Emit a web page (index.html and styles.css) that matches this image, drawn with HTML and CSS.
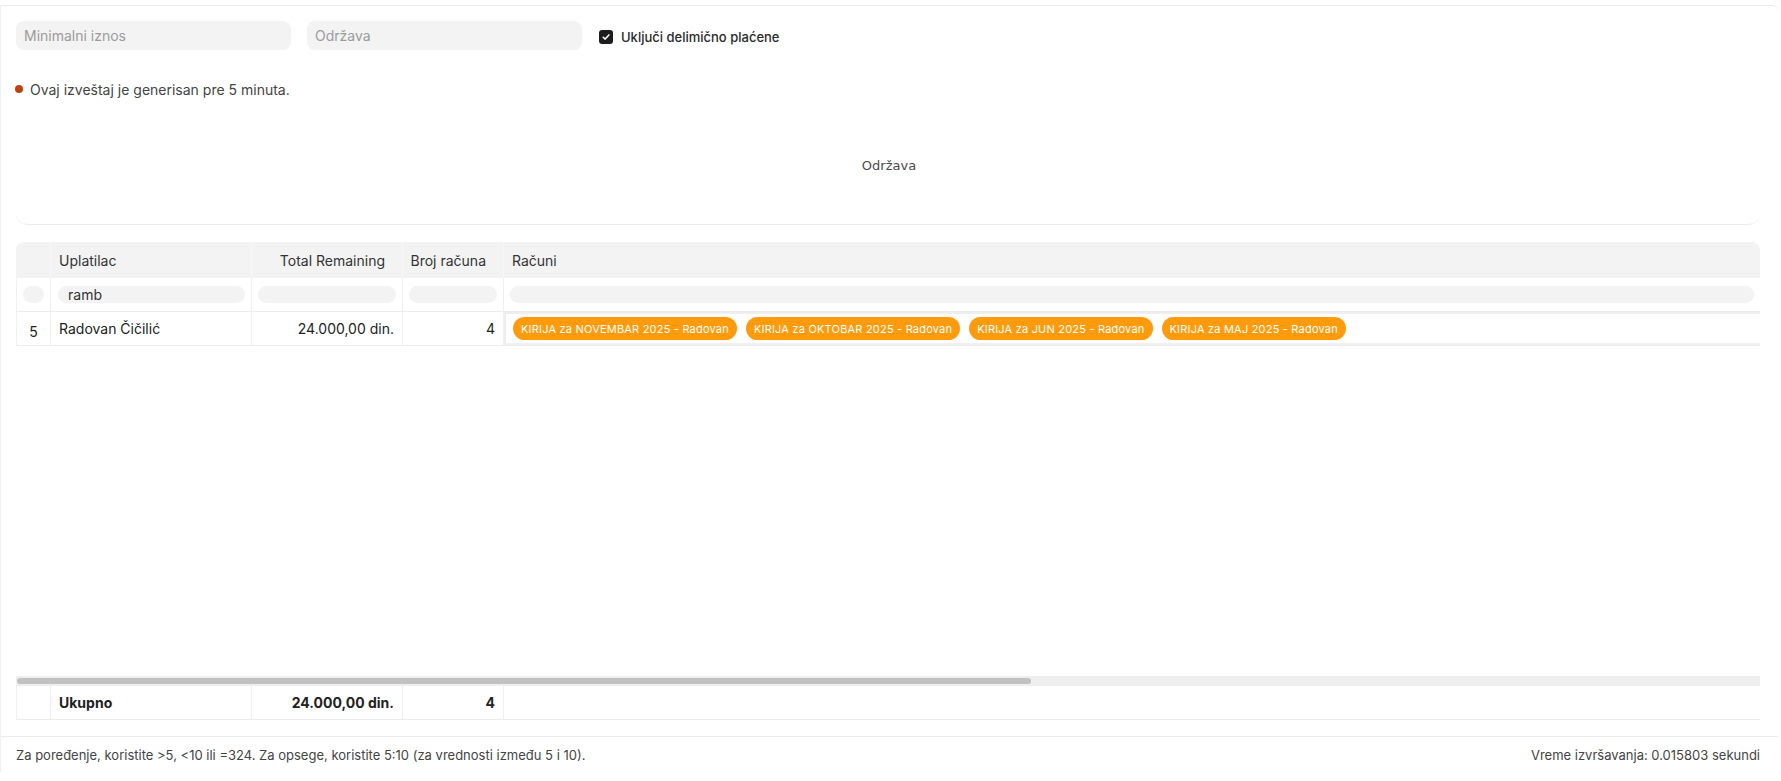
FILE: index.html
```html
<!DOCTYPE html>
<html lang="sr">
<head>
<meta charset="utf-8">
<title>Izveštaj</title>
<link rel="stylesheet" href="styles.css">
</head>
<body>
<div class="card">
  <div class="content">
    <div class="filters">
      <input class="field" type="text" placeholder="Minimalni iznos">
      <input class="field" type="text" placeholder="Održava">
      <label class="check">
        <span class="box"><svg width="10" height="10" viewBox="0 0 10 10"><path d="M2.2 5.2 L4.2 7.1 L7.9 2.9" fill="none" stroke="#fff" stroke-width="1.5" stroke-linecap="round" stroke-linejoin="round"/></svg></span>
        <span class="check-label">Uključi delimično plaćene</span>
      </label>
    </div>
    <div class="status"><span class="dot"></span>Ovaj izveštaj je generisan pre 5 minuta.</div>
    <div class="chart"><span class="chart-label">Održava</span></div>

    <div class="table">
      <div class="row head">
        <div class="cell idx"></div>
        <div class="cell">Uplatilac</div>
        <div class="cell num hnum">Total Remaining</div>
        <div class="cell num hnum">Broj računa</div>
        <div class="cell">Računi</div>
      </div>
      <div class="row filter">
        <div class="cell idx"><span class="pill round"></span></div>
        <div class="cell"><span class="pill text">ramb</span></div>
        <div class="cell"><span class="pill"></span></div>
        <div class="cell"><span class="pill"></span></div>
        <div class="cell"><span class="pill"></span></div>
      </div>
      <div class="row data">
        <div class="cell idx center">5</div>
        <div class="cell">Radovan Čičilić</div>
        <div class="cell num">24.000,00 din.</div>
        <div class="cell num">4</div>
        <div class="cell chips">
          <span class="chip">KIRIJA za NOVEMBAR 2025 - Radovan</span>
          <span class="chip">KIRIJA za OKTOBAR 2025 - Radovan</span>
          <span class="chip">KIRIJA za JUN 2025 - Radovan</span>
          <span class="chip">KIRIJA za MAJ 2025 - Radovan</span>
        </div>
      </div>
      <div class="spacer"></div>
      <div class="scrollbar"><div class="thumb"></div></div>
      <div class="row total">
        <div class="cell idx"></div>
        <div class="cell">Ukupno</div>
        <div class="cell num">24.000,00 din.</div>
        <div class="cell num">4</div>
        <div class="cell"></div>
      </div>
    </div>
  </div>
  <div class="footer">
    <span>Za poređenje, koristite &gt;5, &lt;10 ili =324. Za opsege, koristite 5:10 (za vrednosti između 5 i 10).</span>
    <span>Vreme izvršavanja: 0.015803 sekundi</span>
  </div>
</div>
</body>
</html>
```
FILE: styles.css
```css
* { box-sizing: border-box; }
html, body { margin: 0; padding: 0; background: #fff; }
body {
  font-family: Inter, "Noto Sans", sans-serif;
  color: #2b2b2b;
  padding-top: 5px;
}
.card {
  margin-right: 3px;
  border-top: 1px solid #ebebeb;
  border-left: 1px solid #f0f0f0;
  border-top-right-radius: 6px;
}
.content {
  padding: 15px 18px 0 15px;
}
.filters {
  display: flex;
  align-items: center;
  gap: 16px;
  height: 29px;
}
.field {
  width: 275px;
  height: 29px;
  border: none;
  outline: none;
  border-radius: 8px;
  background: #f3f3f3;
  padding: 0 8px;
  font-family: Inter, sans-serif;
  font-size: 14px;
  color: #333;
}
.field::placeholder { color: #9b9b9b; }
.check {
  display: flex;
  align-items: center;
  gap: 8px;
  margin-left: 1px;
  padding-top: 3px;
}
.box {
  width: 14px;
  height: 14px;
  border-radius: 3px;
  background: #1d1d1d;
  display: flex;
  align-items: center;
  justify-content: center;
}
.check-label {
  font-size: 13px;
  font-weight: 500;
  color: #2a2a2a;
}
.status {
  margin-top: 29px;
  height: 20px;
  display: flex;
  align-items: center;
  gap: 7px;
  font-size: 14px;
  color: #444;
  margin-left: -1px;
}
.dot {
  width: 8px;
  height: 8px;
  border-radius: 50%;
  background: #bf410f;
}
.chart {
  margin-top: 8px;
  height: 118px;
  display: flex;
  align-items: center;
  justify-content: center;
  border-bottom: 1px solid #ececec;
  border-radius: 0 0 12px 12px;
}
.chart-label {
  font-family: "DejaVu Sans", sans-serif;
  font-size: 13px;
  color: #4a4a4a;
  margin-left: 2px;
}
.table {
  margin-top: 17px;
  border-top-left-radius: 8px;
  border-top-right-radius: 8px;
  overflow: hidden;
}
.row {
  display: grid;
  grid-template-columns: 34px 201px 151px 101px 1fr;
  font-size: 14px;
  border-left: 1px solid #f0f0f0;
}
.cell {
  display: flex;
  align-items: center;
  padding: 0 8px;
  min-width: 0;
  white-space: nowrap;
}
.num { justify-content: flex-end; }
.center { justify-content: center; }
.head {
  height: 36px;
  background: #f3f3f3;
  color: #333;
  border-left-color: #f3f3f3;
}
.head .cell { border-right: 1px solid #f7f7f7; }
.head .cell:last-child { border-right: none; }
.head .hnum { padding-right: 17px; padding-left: 0; }
.filter {
  height: 34px;
  border-bottom: 1px solid #ededed;
}
.filter .cell {
  border-right: 1px solid #efefef;
  padding: 0 6px;
}
.filter .cell:last-child { border-right: none; }
.pill {
  display: block;
  width: 100%;
  height: 17px;
  border-radius: 9px;
  background: #f3f3f3;
}
.pill.text {
  font-size: 14px;
  line-height: 17px;
  padding-left: 10px;
  color: #333;
}
.filter .cell:nth-child(2) { padding-left: 7px; }
.data {
  height: 34px;
  border-bottom: 1px solid #ececec;
  color: #222;
}
.data .cell { border-right: 1px solid #efefef; }
.data .cell:last-child { border-right: none; }
.data .idx { padding-top: 5px; }
.chips {
  gap: 9px;
  box-shadow: inset 2px 2px 0 #eeeeee, inset 0 -2px 0 #f1f1f1;
  padding-left: 9px;
}
.chip {
  height: 23px;
  display: inline-flex;
  align-items: center;
  padding: 0 8px;
  border-radius: 12px;
  background: #fd9b0c;
  color: #fff;
  font-size: 11px;
  letter-spacing: 0.2px;
  white-space: nowrap;
}
.spacer { height: 330px; }
.scrollbar {
  height: 10px;
  background: #efefef;
  display: flex;
  align-items: center;
  padding-left: 1px;
}
.thumb {
  width: 1014px;
  height: 6px;
  border-radius: 3px;
  background: #c2c2c2;
}
.total {
  height: 34px;
  font-weight: 700;
  color: #222;
  border-bottom: 1px solid #ececec;
}
.total .cell { border-right: 1px solid #efefef; }
.total .cell:last-child { border-right: none; }
.footer {
  margin-top: 16px;
  border-top: 1px solid #ececec;
  height: 36px;
  padding: 0 18px 0 15px;
  display: flex;
  align-items: center;
  justify-content: space-between;
  font-size: 13px;
  color: #444;
}
```
